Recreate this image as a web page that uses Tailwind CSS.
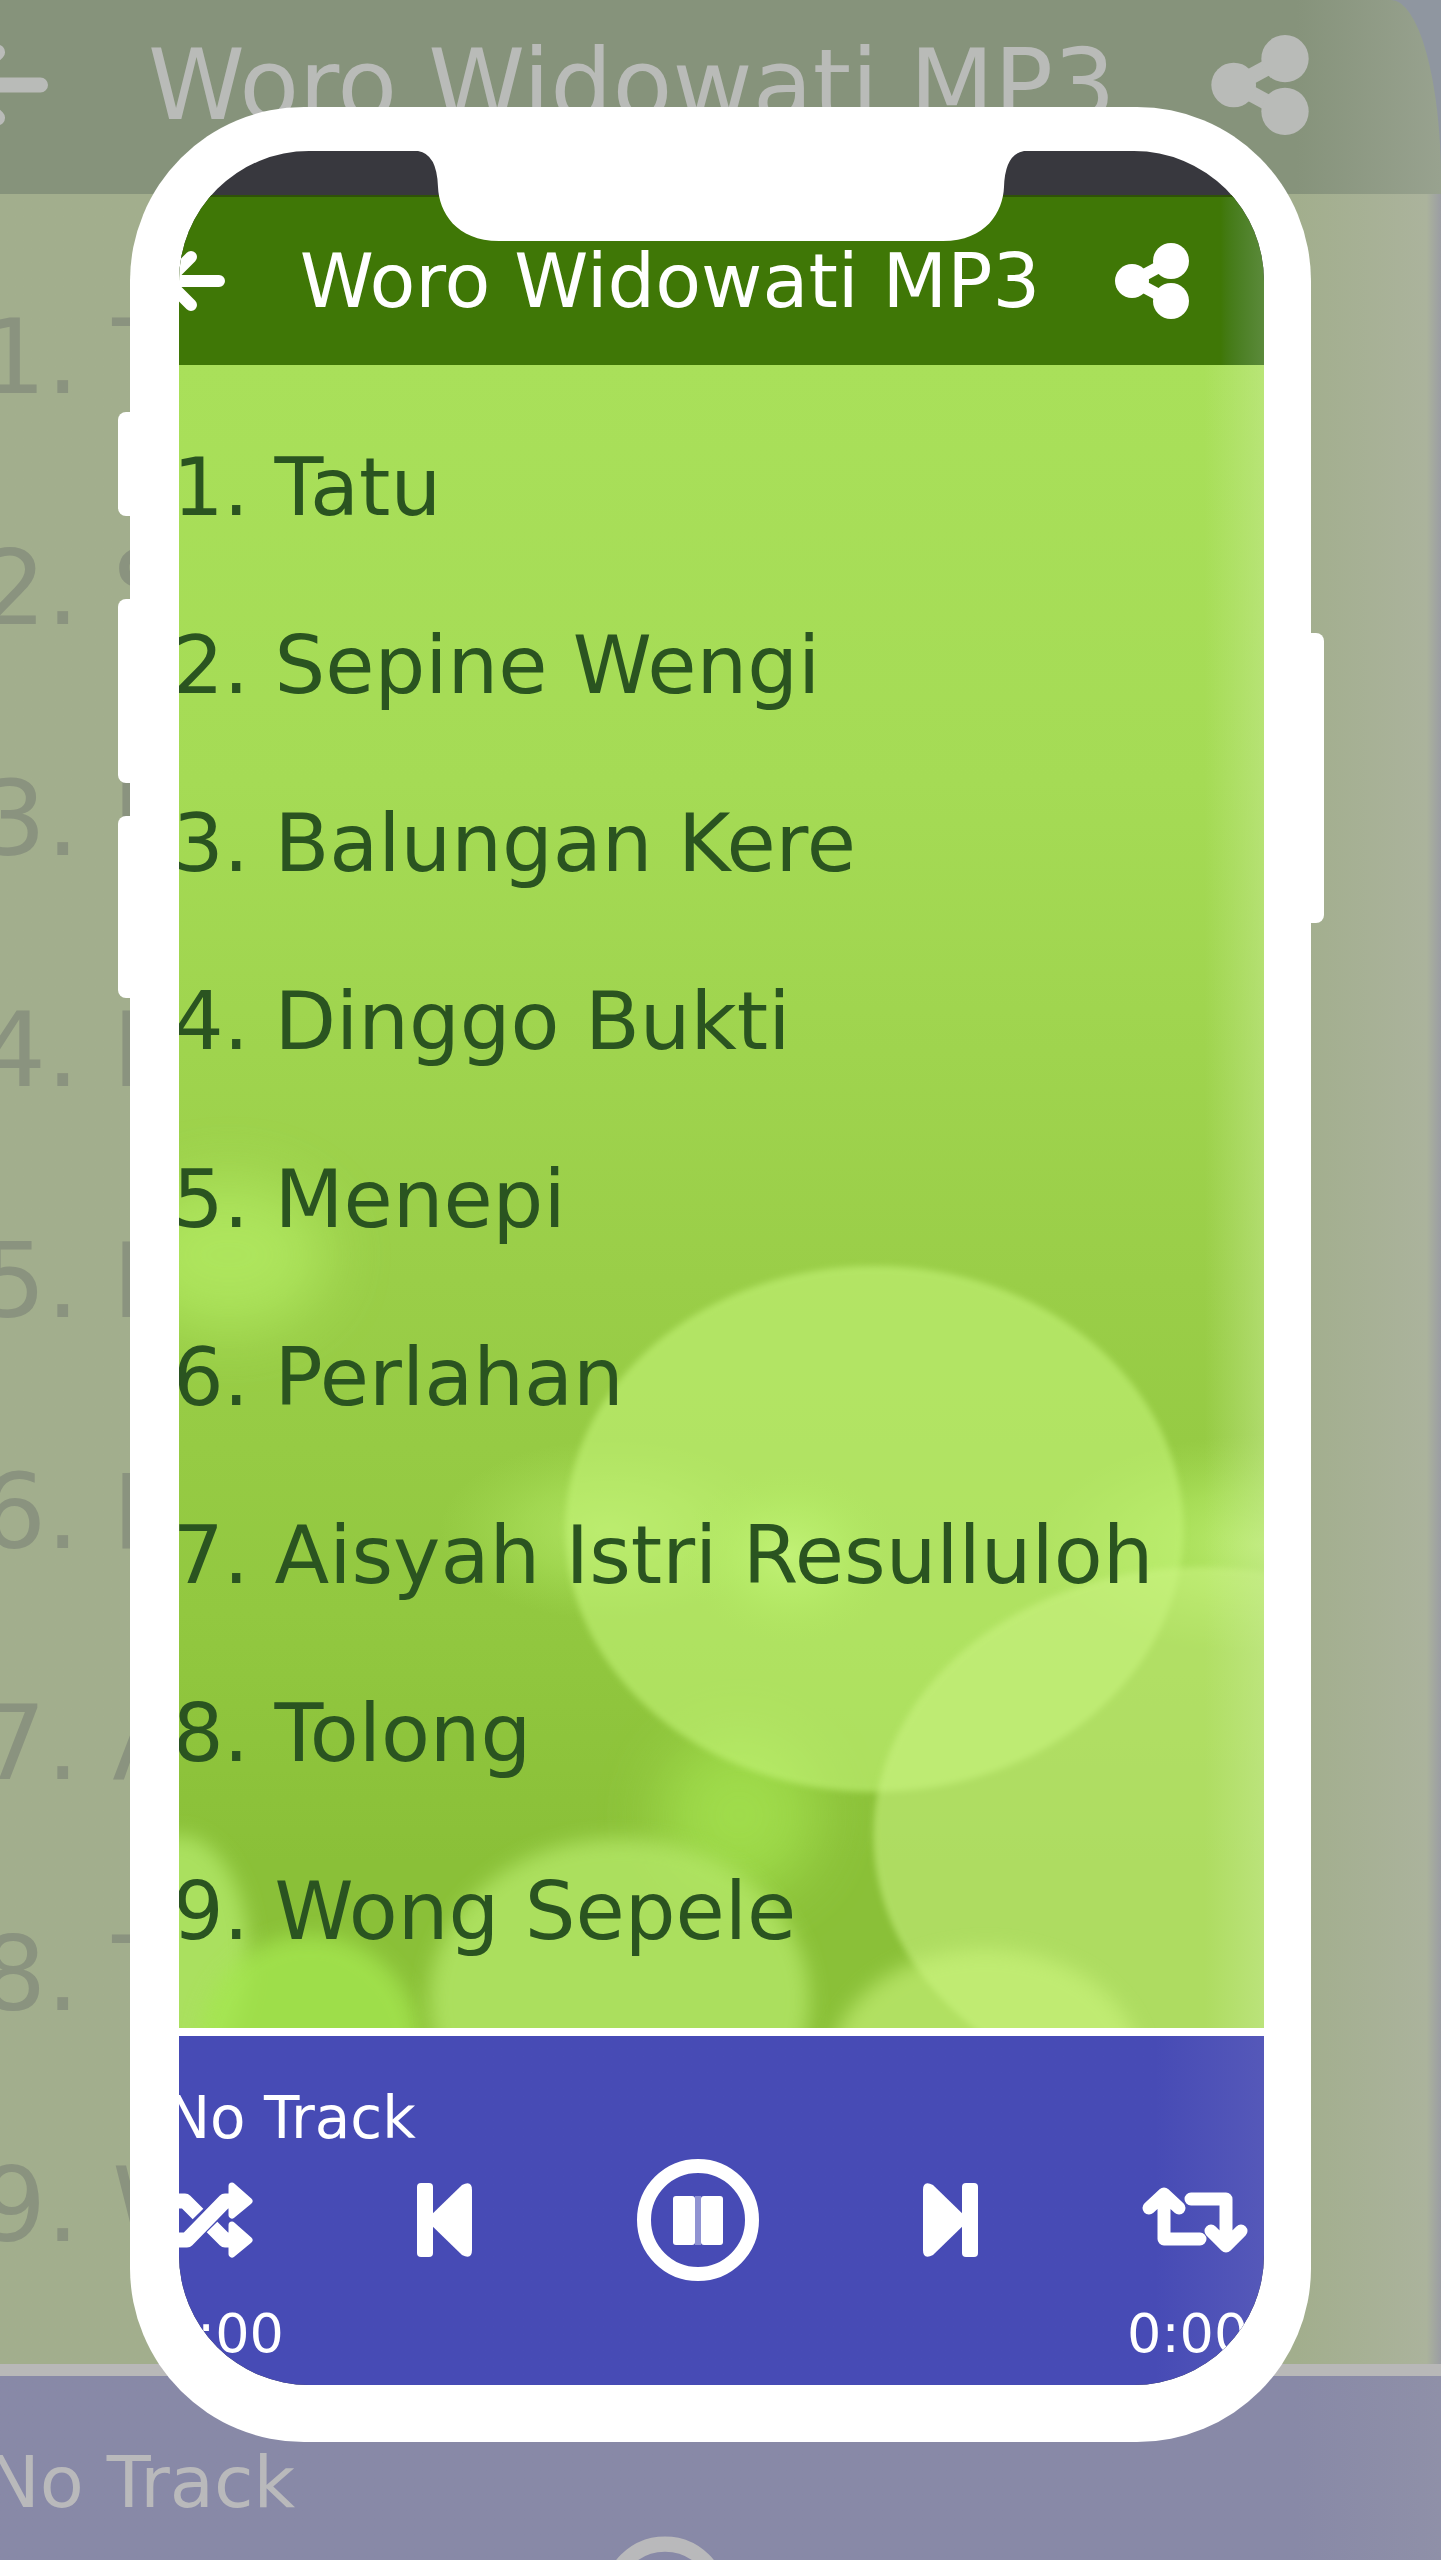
<!DOCTYPE html>
<html lang="en">
<head>
  <meta charset="UTF-8" />
  <meta name="viewport" content="width=device-width, initial-scale=1.0" />
  <title>Woro Widowati MP3</title>
  <script src="https://cdn.jsdelivr.net/npm/@tailwindcss/browser@4"></script>
</head>
<body class="font-['DejaVu_Sans',sans-serif]">
  <div class="relative flex flex-col min-h-screen overflow-hidden whitespace-nowrap">

    <!-- BACKDROP -->
    <div class="grow flex flex-col overflow-hidden" aria-hidden="true">
      <div class="bg-[#8f96a0]">
        <div class="flex items-center h-[194px] pb-[24px] pr-[131px] rounded-tr-[50px_180px] bg-linear-to-r from-[#86937b] from-90% to-[#98a28f] text-[#b9bbb8]">
          <svg class="w-[96px] h-[96px] -ml-[48px] shrink-0" viewBox="0 0 76 76" fill="none" stroke="currentColor" stroke-width="12" stroke-linecap="round" stroke-linejoin="round"><path d="M70 38H12M36 12L10 38l26 26" /></svg>
          <span class="ml-[100px] text-[98px] leading-[98px]">Woro Widowati MP3</span>
          <svg class="w-[100px] h-[100px] ml-auto shrink-0" viewBox="0 0 76 76" fill="currentColor"><path d="M56 18L19 38l37 20" fill="none" stroke="currentColor" stroke-width="12" /><circle cx="18" cy="38" r="17" /><circle cx="57" cy="18" r="18" /><circle cx="57" cy="58" r="18" /></svg>
        </div>
      </div>
      <ol class="grow pt-[47px] pb-[44px] bg-linear-to-r from-[#a2ae8d] from-90% via-[#abb39c] via-99% to-[#9b9da3] text-[104px] leading-[120px] text-[#8a937f]">
        <li class="flex items-center h-[231px] -ml-[20px]">1. Tatu</li>
        <li class="flex items-center h-[231px] -ml-[20px]">2. Sepine</li>
        <li class="flex items-center h-[231px] -ml-[20px]">3. Balungan</li>
        <li class="flex items-center h-[231px] -ml-[20px]">4. Dinggo</li>
        <li class="flex items-center h-[231px] -ml-[20px]">5. Menepi</li>
        <li class="flex items-center h-[231px] -ml-[20px]">6. Perlahan</li>
        <li class="flex items-center h-[231px] -ml-[20px]">7. Aisyah</li>
        <li class="flex items-center h-[231px] -ml-[20px]">8. Tolong</li>
        <li class="flex items-center h-[231px] -ml-[20px]">9. Wong</li>
      </ol>
      <div class="h-[196px] shrink-0 overflow-hidden pt-[64px] border-t-[12px] border-[#b8b8b8] bg-linear-to-r from-[#8889a7] from-90% to-[#8f90a8] text-[#b9b9bb]">
        <p class="-ml-[14px] text-[72px] leading-[84px]">No Track</p>
        <svg class="w-[126px] h-[126px] ml-[602px] mt-[12px]" viewBox="0 0 124 124" fill="none"><circle cx="62" cy="62" r="54" stroke="currentColor" stroke-width="15" /></svg>
      </div>
    </div>

    <!-- PHONE -->
    <div class="absolute inset-x-[9%] top-[107px]">
      <span class="absolute -left-[12px] top-[305px] w-8 h-[104px] rounded-lg bg-white"></span>
      <span class="absolute -left-[12px] top-[492px] w-8 h-[184px] rounded-lg bg-white"></span>
      <span class="absolute -left-[12px] top-[709px] w-8 h-[182px] rounded-lg bg-white"></span>
      <span class="absolute -right-[13px] top-[526px] w-8 h-[290px] rounded-lg bg-white"></span>

      <div class="relative rounded-[174px] bg-white pl-[49px] pr-[47px] pt-[44px] pb-[57px]">
        <div class="relative overflow-hidden rounded-[130px] bg-[#38383e]">
          <div class="h-[44px]"></div>

          <header class="flex items-center h-[170px] pr-[74px] border-t-2 border-[#2f5208] bg-linear-to-r from-[#3f7706] from-96% to-[#5b8a3a] text-white">
            <button class="-ml-[20px] shrink-0" aria-label="Back">
              <svg class="block w-[68px] h-[76px]" viewBox="0 0 68 76" fill="none" stroke="currentColor" stroke-width="12" stroke-linecap="round" stroke-linejoin="round"><path d="M60 38H12M32 14L8 38l24 24" /></svg>
            </button>
            <h1 class="ml-[73px] text-[75px] leading-[96px]">Woro Widowati MP3</h1>
            <button class="ml-auto shrink-0" aria-label="Share">
              <svg class="block w-[76px] h-[76px]" viewBox="0 0 76 76" fill="currentColor"><path d="M56 18L19 38l37 20" fill="none" stroke="currentColor" stroke-width="12" /><circle cx="18" cy="38" r="17" /><circle cx="57" cy="18" r="18" /><circle cx="57" cy="58" r="18" /></svg>
            </button>
          </header>

          <main class="relative bg-[#9bd049]">
            <svg class="absolute inset-0 w-full h-full" viewBox="0 0 1085 1663" preserveAspectRatio="none">
              <defs>
                <linearGradient id="base" x1="0" y1="0" x2="0" y2="1">
                  <stop offset="0" stop-color="#a9e05a" />
                  <stop offset="0.25" stop-color="#a5db55" />
                  <stop offset="0.55" stop-color="#9ace48" />
                  <stop offset="0.75" stop-color="#92c840" />
                  <stop offset="0.9" stop-color="#8ac038" />
                  <stop offset="1" stop-color="#8ac038" />
                </linearGradient>
                <linearGradient id="edge" x1="0" y1="0" x2="1" y2="0">
                  <stop offset="0" stop-color="#c8ea94" stop-opacity="0" />
                  <stop offset="1" stop-color="#c8ea94" stop-opacity="0.5" />
                </linearGradient>
                <radialGradient id="glow">
                  <stop offset="0" stop-color="#c6f57c" stop-opacity="0.8" />
                  <stop offset="0.5" stop-color="#baf06c" stop-opacity="0.5" />
                  <stop offset="1" stop-color="#b0e860" stop-opacity="0" />
                </radialGradient>
                <filter id="soft" x="-10%" y="-10%" width="120%" height="120%"><feGaussianBlur stdDeviation="3" /></filter>
                <filter id="softer" x="-20%" y="-20%" width="140%" height="140%"><feGaussianBlur stdDeviation="10" /></filter>
                <filter id="haze" x="-50%" y="-50%" width="200%" height="200%"><feGaussianBlur stdDeviation="30" /></filter>
              </defs>
              <rect width="1085" height="1663" fill="url(#base)" />
              <ellipse cx="50" cy="890" rx="100" ry="75" fill="#b2ea62" opacity="0.8" filter="url(#haze)" />
              <ellipse cx="430" cy="1165" rx="170" ry="90" fill="url(#glow)" opacity="0.7" />
              <ellipse cx="1085" cy="1180" rx="230" ry="110" fill="url(#glow)" />
              <ellipse cx="560" cy="1450" rx="80" ry="80" fill="#a4e250" opacity="0.8" filter="url(#haze)" />
              <ellipse cx="0" cy="1590" rx="70" ry="120" fill="#b8ee70" opacity="0.7" filter="url(#softer)" />
              <ellipse cx="130" cy="1680" rx="110" ry="110" fill="#a4e650" opacity="0.8" filter="url(#softer)" />
              <ellipse cx="440" cy="1635" rx="190" ry="162" fill="#b4e768" opacity="0.8" filter="url(#softer)" />
              <ellipse cx="695" cy="1164" rx="309" ry="263" fill="#c4f478" opacity="0.6" filter="url(#soft)" />
              <ellipse cx="1022" cy="1470" rx="328" ry="268" fill="#ccf484" opacity="0.55" filter="url(#soft)" />
              <ellipse cx="806" cy="1702" rx="155" ry="118" fill="#ccf67e" opacity="0.6" filter="url(#softer)" />
              <ellipse cx="610" cy="1190" rx="110" ry="90" fill="url(#glow)" />
              <rect x="1025" width="60" height="1663" fill="url(#edge)" />
            </svg>

            <ol class="relative -ml-[6px] pt-[34px] pb-[27px] text-[80px] leading-[96px] text-[#2a5420]">
              <li><button class="flex items-center w-full h-[178px]">1. Tatu</button></li>
              <li><button class="flex items-center w-full h-[178px]">2. Sepine Wengi</button></li>
              <li><button class="flex items-center w-full h-[178px]">3. Balungan Kere</button></li>
              <li><button class="flex items-center w-full h-[178px]">4. Dinggo Bukti</button></li>
              <li><button class="flex items-center w-full h-[178px]">5. Menepi</button></li>
              <li><button class="flex items-center w-full h-[178px]">6. Perlahan</button></li>
              <li><button class="flex items-center w-full h-[178px]">7. Aisyah Istri Resulluloh</button></li>
              <li><button class="flex items-center w-full h-[178px]">8. Tolong</button></li>
              <li><button class="flex items-center w-full h-[178px]">9. Wong Sepele</button></li>
            </ol>
          </main>

          <!-- PLAYER -->
          <footer class="border-t-[8px] border-white bg-linear-to-r from-[#474bb5] from-90% to-[#5558b9] pt-[50px] pb-[19px] text-white">
            <div class="-ml-[32px] pr-[16px]">
              <p class="pl-[20px] text-[58px] leading-[64px]">No Track</p>
              <div class="flex items-center justify-between mt-[8px]">
                <button aria-label="Shuffle">
                  <svg class="block w-[106px] h-[76px]" viewBox="0 0 106 76" fill="none" stroke="currentColor" stroke-width="15" stroke-linejoin="round"><path d="M0 19h38l13 13M0 58h40L78 19h8M65 45l13 13h8" /><path d="M85 4l17 15-17 14zM85 43l17 15-17 14z" fill="currentColor" stroke-width="7" /></svg>
                </button>
                <button aria-label="Previous">
                  <svg class="block w-[57px] h-[76px]" viewBox="0 0 57 76" fill="currentColor"><rect x="1" y="1" width="16" height="74" rx="4" /><path d="M10 38L46 3q10-5 10 5v60q0 10-10 5z" /></svg>
                </button>
                <button aria-label="Pause">
                  <svg class="block w-[124px] h-[124px]" viewBox="0 0 124 124" fill="currentColor"><circle cx="62" cy="62" r="54" fill="none" stroke="currentColor" stroke-width="14" /><rect x="37" y="38" width="22" height="49" rx="3" /><rect x="65" y="38" width="22" height="49" rx="3" /><path d="M59 38h6v49h-6z" opacity="0.4" /></svg>
                </button>
                <button aria-label="Next">
                  <svg class="block w-[57px] h-[76px]" viewBox="0 0 57 76" fill="currentColor"><rect x="40" y="1" width="16" height="74" rx="4" /><path d="M47 38L11 3q-10-5-10 5v60q0 10 10 5z" /></svg>
                </button>
                <button aria-label="Repeat">
                  <svg class="block w-[106px] h-[76px]" viewBox="0 0 106 76" fill="none" stroke="currentColor" stroke-width="13" stroke-linecap="round" stroke-linejoin="round"><path d="M7 26L22 12l15 14M22 16v41h36M49 17h35v40M69 49l15 15 15-15" /></svg>
                </button>
              </div>
              <div class="flex justify-between mt-[20px] pl-[16px] text-[54px] leading-[64px]">
                <span>0:00</span>
                <span>0:00</span>
              </div>
            </div>
          </footer>

        </div>

        <!-- notch -->
        <svg class="absolute top-[43px] left-1/2 -translate-x-1/2 w-[606px] h-[91px]" viewBox="0 0 606 91" fill="white"><path d="M0 0v1q19 3 20 36c1 25 18 54 61 54h444c43 0 60-29 61-54q1-33 20-36V0z" /></svg>
      </div>
    </div>

  </div>
</body>
</html>
